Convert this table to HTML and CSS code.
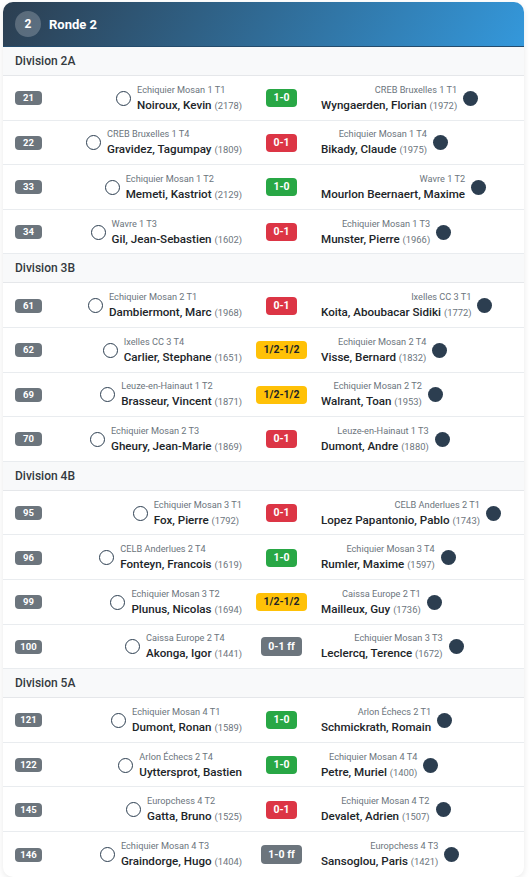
FILE: index.html
```html
<!DOCTYPE html>
<html lang="fr">
<head>
<meta charset="utf-8">
<title>Ronde 2</title>
<link rel="stylesheet" href="styles.css">
</head>
<body>
<div class="card">
  <div class="card-head">
    <span class="round-num">2</span>
    <span class="round-title">Ronde 2</span>
  </div>

  <div class="division">Division 2A</div>
  <div class="match">
    <span class="board">21</span>
    <div class="white"><span class="piece w"></span><div class="pl"><div class="club">Echiquier Mosan 1 T1</div><div class="name">Noiroux, Kevin <span class="elo">(2178)</span></div></div></div>
    <div class="res"><span class="badge win">1-0</span></div>
    <div class="black"><div class="pl"><div class="club">CREB Bruxelles 1 T1</div><div class="name">Wyngaerden, Florian <span class="elo">(1972)</span></div></div><span class="piece b"></span></div>
  </div>
  <div class="match">
    <span class="board">22</span>
    <div class="white"><span class="piece w"></span><div class="pl"><div class="club">CREB Bruxelles 1 T4</div><div class="name">Gravidez, Tagumpay <span class="elo">(1809)</span></div></div></div>
    <div class="res"><span class="badge loss">0-1</span></div>
    <div class="black"><div class="pl"><div class="club">Echiquier Mosan 1 T4</div><div class="name">Bikady, Claude <span class="elo">(1975)</span></div></div><span class="piece b"></span></div>
  </div>
  <div class="match">
    <span class="board">33</span>
    <div class="white"><span class="piece w"></span><div class="pl"><div class="club">Echiquier Mosan 1 T2</div><div class="name">Memeti, Kastriot <span class="elo">(2129)</span></div></div></div>
    <div class="res"><span class="badge win">1-0</span></div>
    <div class="black"><div class="pl"><div class="club">Wavre 1 T2</div><div class="name">Mourlon Beernaert, Maxime</div></div><span class="piece b"></span></div>
  </div>
  <div class="match">
    <span class="board">34</span>
    <div class="white"><span class="piece w"></span><div class="pl"><div class="club">Wavre 1 T3</div><div class="name">Gil, Jean-Sebastien <span class="elo">(1602)</span></div></div></div>
    <div class="res"><span class="badge loss">0-1</span></div>
    <div class="black"><div class="pl"><div class="club">Echiquier Mosan 1 T3</div><div class="name">Munster, Pierre <span class="elo">(1966)</span></div></div><span class="piece b"></span></div>
  </div>

  <div class="division">Division 3B</div>
  <div class="match">
    <span class="board">61</span>
    <div class="white"><span class="piece w"></span><div class="pl"><div class="club">Echiquier Mosan 2 T1</div><div class="name">Dambiermont, Marc <span class="elo">(1968)</span></div></div></div>
    <div class="res"><span class="badge loss">0-1</span></div>
    <div class="black"><div class="pl"><div class="club">Ixelles CC 3 T1</div><div class="name">Koita, Aboubacar Sidiki <span class="elo">(1772)</span></div></div><span class="piece b"></span></div>
  </div>
  <div class="match">
    <span class="board">62</span>
    <div class="white"><span class="piece w"></span><div class="pl"><div class="club">Ixelles CC 3 T4</div><div class="name">Carlier, Stephane <span class="elo">(1651)</span></div></div></div>
    <div class="res"><span class="badge draw">1/2-1/2</span></div>
    <div class="black"><div class="pl"><div class="club">Echiquier Mosan 2 T4</div><div class="name">Visse, Bernard <span class="elo">(1832)</span></div></div><span class="piece b"></span></div>
  </div>
  <div class="match">
    <span class="board">69</span>
    <div class="white"><span class="piece w"></span><div class="pl"><div class="club">Leuze-en-Hainaut 1 T2</div><div class="name">Brasseur, Vincent <span class="elo">(1871)</span></div></div></div>
    <div class="res"><span class="badge draw">1/2-1/2</span></div>
    <div class="black"><div class="pl"><div class="club">Echiquier Mosan 2 T2</div><div class="name">Walrant, Toan <span class="elo">(1953)</span></div></div><span class="piece b"></span></div>
  </div>
  <div class="match">
    <span class="board">70</span>
    <div class="white"><span class="piece w"></span><div class="pl"><div class="club">Echiquier Mosan 2 T3</div><div class="name">Gheury, Jean-Marie <span class="elo">(1869)</span></div></div></div>
    <div class="res"><span class="badge loss">0-1</span></div>
    <div class="black"><div class="pl"><div class="club">Leuze-en-Hainaut 1 T3</div><div class="name">Dumont, Andre <span class="elo">(1880)</span></div></div><span class="piece b"></span></div>
  </div>

  <div class="division">Division 4B</div>
  <div class="match">
    <span class="board">95</span>
    <div class="white"><span class="piece w"></span><div class="pl"><div class="club">Echiquier Mosan 3 T1</div><div class="name">Fox, Pierre <span class="elo">(1792)</span></div></div></div>
    <div class="res"><span class="badge loss">0-1</span></div>
    <div class="black"><div class="pl"><div class="club">CELB Anderlues 2 T1</div><div class="name">Lopez Papantonio, Pablo <span class="elo">(1743)</span></div></div><span class="piece b"></span></div>
  </div>
  <div class="match">
    <span class="board">96</span>
    <div class="white"><span class="piece w"></span><div class="pl"><div class="club">CELB Anderlues 2 T4</div><div class="name">Fonteyn, Francois <span class="elo">(1619)</span></div></div></div>
    <div class="res"><span class="badge win">1-0</span></div>
    <div class="black"><div class="pl"><div class="club">Echiquier Mosan 3 T4</div><div class="name">Rumler, Maxime <span class="elo">(1597)</span></div></div><span class="piece b"></span></div>
  </div>
  <div class="match">
    <span class="board">99</span>
    <div class="white"><span class="piece w"></span><div class="pl"><div class="club">Echiquier Mosan 3 T2</div><div class="name">Plunus, Nicolas <span class="elo">(1694)</span></div></div></div>
    <div class="res"><span class="badge draw">1/2-1/2</span></div>
    <div class="black"><div class="pl"><div class="club">Caissa Europe 2 T1</div><div class="name">Mailleux, Guy <span class="elo">(1736)</span></div></div><span class="piece b"></span></div>
  </div>
  <div class="match">
    <span class="board">100</span>
    <div class="white"><span class="piece w"></span><div class="pl"><div class="club">Caissa Europe 2 T4</div><div class="name">Akonga, Igor <span class="elo">(1441)</span></div></div></div>
    <div class="res"><span class="badge ff">0-1 ff</span></div>
    <div class="black"><div class="pl"><div class="club">Echiquier Mosan 3 T3</div><div class="name">Leclercq, Terence <span class="elo">(1672)</span></div></div><span class="piece b"></span></div>
  </div>

  <div class="division">Division 5A</div>
  <div class="match">
    <span class="board">121</span>
    <div class="white"><span class="piece w"></span><div class="pl"><div class="club">Echiquier Mosan 4 T1</div><div class="name">Dumont, Ronan <span class="elo">(1589)</span></div></div></div>
    <div class="res"><span class="badge win">1-0</span></div>
    <div class="black"><div class="pl"><div class="club">Arlon Échecs 2 T1</div><div class="name">Schmickrath, Romain</div></div><span class="piece b"></span></div>
  </div>
  <div class="match">
    <span class="board">122</span>
    <div class="white"><span class="piece w"></span><div class="pl"><div class="club">Arlon Échecs 2 T4</div><div class="name">Uyttersprot, Bastien</div></div></div>
    <div class="res"><span class="badge win">1-0</span></div>
    <div class="black"><div class="pl"><div class="club">Echiquier Mosan 4 T4</div><div class="name">Petre, Muriel <span class="elo">(1400)</span></div></div><span class="piece b"></span></div>
  </div>
  <div class="match">
    <span class="board">145</span>
    <div class="white"><span class="piece w"></span><div class="pl"><div class="club">Europchess 4 T2</div><div class="name">Gatta, Bruno <span class="elo">(1525)</span></div></div></div>
    <div class="res"><span class="badge loss">0-1</span></div>
    <div class="black"><div class="pl"><div class="club">Echiquier Mosan 4 T2</div><div class="name">Devalet, Adrien <span class="elo">(1507)</span></div></div><span class="piece b"></span></div>
  </div>
  <div class="match last">
    <span class="board">146</span>
    <div class="white"><span class="piece w"></span><div class="pl"><div class="club">Echiquier Mosan 4 T3</div><div class="name">Graindorge, Hugo <span class="elo">(1404)</span></div></div></div>
    <div class="res"><span class="badge ff">1-0 ff</span></div>
    <div class="black"><div class="pl"><div class="club">Europchess 4 T3</div><div class="name">Sansoglou, Paris <span class="elo">(1421)</span></div></div><span class="piece b"></span></div>
  </div>
</div>
</body>
</html>
```

FILE: styles.css
```css
* { box-sizing: border-box; }
html, body { margin: 0; padding: 0; background: #ffffff; }
body {
  padding: 2px 5px 0 3px;
  font-family: "Segoe UI", Roboto, "Noto Sans", sans-serif;
  color: #212529;
}
.card {
  width: 521px;
  background: #fff;
  border-radius: 10px;
  overflow: hidden;
  box-shadow: 0 2px 6px rgba(0, 0, 0, 0.09);
}
.card-head {
  height: 45px;
  display: flex;
  align-items: center;
  gap: 8px;
  padding: 0 12px;
  background: linear-gradient(120deg, #2c3e50 0%, #3498db 100%);
  border-bottom: 1px solid #244c6d;
  color: #fff;
}
.round-num {
  width: 26px;
  height: 26px;
  border-radius: 50%;
  background: rgba(255, 255, 255, 0.22);
  display: flex;
  align-items: center;
  justify-content: center;
  font-weight: 700;
  font-size: 12px;
}
.round-title { font-weight: 700; font-size: 13px; }
.division {
  height: 29px;
  display: flex;
  align-items: center;
  padding: 0 12px;
  background: #f8f9fa;
  border-bottom: 1px solid #e5e7ea;
  font-size: 12px;
  font-weight: 500;
  color: #343a40;
}
.match {
  display: grid;
  grid-template-columns: 36px 1fr 79px 1fr;
  align-items: center;
  height: 44.6px;
  padding: 1px 12px 0;
  border-bottom: 1px solid #e9ecef;
}
.match.last { border-bottom: 0; }
.board {
  justify-self: start;
  background: #6c757d;
  color: #fff;
  font-size: 9.5px;
  font-weight: 700;
  border-radius: 4px;
  min-width: 27px;
  height: 14px;
  line-height: 14px;
  padding: 0 5px;
  text-align: center;
}
.white { display: flex; justify-content: flex-end; align-items: center; gap: 6px; }
.black { display: flex; justify-content: flex-start; align-items: center; gap: 6px; }
.black .pl { text-align: right; }
.club { font-size: 9.2px; line-height: 14px; color: #6c757d; white-space: nowrap; }
.name { font-size: 11.6px; line-height: 16px; font-weight: 500; color: #212529; white-space: nowrap; }
.elo { font-size: 9.4px; font-weight: 400; color: #6c757d; }
.piece { width: 15px; height: 15px; border-radius: 50%; flex: none; }
.piece.w { border: 1.5px solid #2c3e50; background: #fff; }
.piece.b { background: #2c3e50; }
.res { display: flex; justify-content: center; }
.badge {
  font-size: 10.5px;
  font-weight: 700;
  line-height: 18px;
  height: 18px;
  padding: 0 7px;
  border-radius: 4px;
  color: #fff;
  white-space: nowrap;
}
.badge.win { background: #28a745; }
.badge.loss { background: #dc3545; }
.badge.draw { background: #ffc107; color: #212529; }
.badge.ff { background: #6c757d; height: 19px; line-height: 19px; }
```
